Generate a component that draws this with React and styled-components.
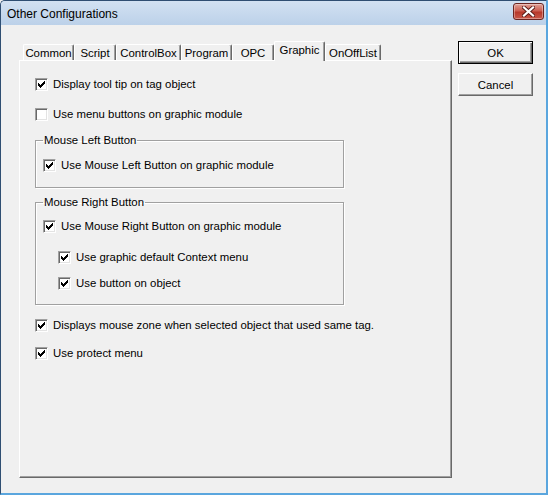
import React from 'react';
import styled, { createGlobalStyle } from 'styled-components';

const GlobalStyle = createGlobalStyle`
  html, body {
    margin: 0;
    padding: 0;
    background: #f0f0f0;
  }
  body {
    font-family: 'Liberation Sans', Arial, sans-serif;
  }
`;

const tabs = [
  { label: 'Common', width: 51 },
  { label: 'Script', width: 42 },
  { label: 'ControlBox', width: 65 },
  { label: 'Program', width: 51 },
  { label: 'OPC', width: 42 },
  { label: 'Graphic', width: 51, active: true },
  { label: 'OnOffList', width: 56 },
];

// classic 7x7 windows check glyph, one 3px column per x
const checkCols = [2, 3, 4, 3, 2, 1, 0];

const CheckBox = ({ checked }) => (
  <Box>
    {checked && (
      <svg width="7" height="7" viewBox="0 0 7 7" shapeRendering="crispEdges">
        {checkCols.map((y, x) => (
          <rect key={x} x={x} y={y} width="1" height="3" fill="#000" />
        ))}
      </svg>
    )}
  </Box>
);

const Option = ({ checked = true, indent, top, children }) => (
  <Row $indent={indent} $top={top}>
    <CheckBox checked={checked} />
    <Label>{children}</Label>
  </Row>
);

const App = () => {
  return (
    <>
      <GlobalStyle />
      <Window>
        <TitleBar>
          <Title>Other Configurations</Title>
          <CloseButton>
            <svg width="13" height="11" viewBox="0 0 13 11">
              <path
                d="M2 1.5 L11 9.5 M11 1.5 L2 9.5"
                stroke="#5a1e1a"
                strokeWidth="4"
                strokeLinecap="square"
              />
              <path
                d="M2 1.5 L11 9.5 M11 1.5 L2 9.5"
                stroke="#ffffff"
                strokeWidth="2.2"
                strokeLinecap="square"
              />
            </svg>
          </CloseButton>
        </TitleBar>

        <Client>
          <TabControl>
            <TabStrip>
              {tabs.map((t) => (
                <Tab key={t.label} $width={t.width} $active={t.active}>
                  {t.label}
                </Tab>
              ))}
            </TabStrip>
            <Panel>
              <Option top={17}>Display tool tip on tag object</Option>
              <Option top={17} checked={false}>
                Use menu buttons on graphic module
              </Option>

              <Group $top={13} $pt={12} $pb={15}>
                <GroupTitle>Mouse Left Button</GroupTitle>
                <Option top={0}>Use Mouse Left Button on graphic module</Option>
              </Group>

              <Group $top={8} $pt={11} $pb={14}>
                <GroupTitle>Mouse Right Button</GroupTitle>
                <Option top={0}>Use Mouse Right Button on graphic module</Option>
                <Option top={18} indent={15}>
                  Use graphic default Context menu
                </Option>
                <Option top={13} indent={15}>
                  Use button on object
                </Option>
              </Group>

              <Option top={14}>
                Displays mouse zone when selected object that used same tag.
              </Option>
              <Option top={15}>Use protect menu</Option>
            </Panel>
          </TabControl>

          <ButtonColumn>
            <DialogButton $default>OK</DialogButton>
            <DialogButton>Cancel</DialogButton>
          </ButtonColumn>
        </Client>
      </Window>
    </>
  );
};
export default App;

const Window = styled.div`
  width: 548px;
  height: 495px;
  box-sizing: border-box;
  display: flex;
  flex-direction: column;
  background: #c3d6ec;
  border-left: 1px solid #2f4e72;
  border-top: 1px solid #2f4e72;
  border-right: 2px solid #5aa6de;
  border-bottom: 2px solid #5aa6de;
  border-top-left-radius: 5px;
  overflow: hidden;
`;

const TitleBar = styled.div`
  height: 24px;
  flex: none;
  display: flex;
  align-items: center;
  justify-content: space-between;
  padding: 0 2px 0 6px;
  background: linear-gradient(#d2e1f2, #bcd1e9);
`;

const Title = styled.span`
  font-family: 'Liberation Sans', Arial, sans-serif;
  font-size: 12px;
  color: #000;
  margin-top: 1px;
`;

const CloseButton = styled.div`
  width: 29px;
  height: 15px;
  margin-top: -3px;
  display: flex;
  align-items: center;
  justify-content: center;
  border: 1px solid #6b2521;
  border-radius: 3px;
  background: linear-gradient(#e0a197, #cc5f52 45%, #b8392b 55%, #c9584a);
  box-shadow: inset 0 0 0 1px rgba(255, 255, 255, 0.35);
`;

const Client = styled.div`
  flex: 1;
  display: flex;
  align-items: flex-start;
  background: #f0f0f0;
  padding: 16px 0 0 18px;
`;

const TabControl = styled.div`
  width: 433px;
  display: flex;
  flex-direction: column;
`;

const TabStrip = styled.div`
  height: 19px;
  display: flex;
  align-items: flex-end;
  padding-left: 4px;
  position: relative;
  z-index: 1;
`;

const Tab = styled.div`
  box-sizing: border-box;
  width: ${(p) => p.$width}px;
  height: ${(p) => (p.$active ? 20 : 16)}px;
  margin-bottom: ${(p) => (p.$active ? -1 : 0)}px;
  padding-top: 2px;
  background: #f0f0f0;
  border-top: 1px solid #ffffff;
  border-left: 1px solid #ffffff;
  border-right: 1px solid #696969;
  box-shadow: inset -1px 0 0 #a0a0a0;
  border-top-left-radius: 2px;
  border-top-right-radius: 2px;
  font-size: 11.4px;
  line-height: 13px;
  color: #000;
  text-align: center;
  white-space: nowrap;
`;

const Panel = styled.div`
  box-sizing: border-box;
  height: 418px;
  display: flex;
  flex-direction: column;
  align-items: flex-start;
  padding: 0 0 0 15px;
  background: #f0f0f0;
  border-top: 1px solid #ffffff;
  border-left: 1px solid #ffffff;
  border-right: 1px solid #696969;
  border-bottom: 1px solid #696969;
  box-shadow: inset -1px -1px 0 #a0a0a0;
`;

const Row = styled.div`
  display: flex;
  align-items: center;
  height: 13px;
  margin-top: ${(p) => p.$top || 0}px;
  margin-left: ${(p) => p.$indent || 0}px;
`;

const Box = styled.div`
  box-sizing: border-box;
  width: 13px;
  height: 13px;
  flex: none;
  display: flex;
  align-items: center;
  justify-content: center;
  background: #ffffff;
  border-top: 1px solid #a0a0a0;
  border-left: 1px solid #a0a0a0;
  border-right: 1px solid #ffffff;
  border-bottom: 1px solid #ffffff;
  box-shadow: inset 1px 1px 0 #696969, inset -1px -1px 0 #e3e3e3;
`;

const Label = styled.span`
  margin-left: 5px;
  font-size: 11.4px;
  line-height: 13px;
  color: #000;
  white-space: nowrap;
`;

const Group = styled.fieldset`
  box-sizing: border-box;
  width: 309px;
  margin: ${(p) => p.$top}px 0 0 0;
  padding: ${(p) => p.$pt}px 0 ${(p) => p.$pb}px 7px;
  border: 1px solid #a0a0a0;
  box-shadow: inset 1px 1px 0 #ffffff, 1px 1px 0 #ffffff;
  display: flex;
  flex-direction: column;
`;

const GroupTitle = styled.legend`
  padding: 0 1px;
  font-size: 11.4px;
  line-height: 13px;
  color: #000;
`;

const ButtonColumn = styled.div`
  display: flex;
  flex-direction: column;
  gap: 9px;
  margin-left: 6px;
`;

const DialogButton = styled.div`
  box-sizing: border-box;
  width: 75px;
  height: 23px;
  display: flex;
  align-items: center;
  justify-content: center;
  font-size: 11.4px;
  color: #000;
  background: #f0f0f0;
  border: 1px solid ${(p) => (p.$default ? '#000000' : '#f0f0f0')};
  box-shadow: inset 1px 1px 0 #ffffff, inset -1px -1px 0 #696969,
    inset -2px -2px 0 #a0a0a0;
  ${(p) =>
    !p.$default &&
    `
    border-top-color: #ffffff;
    border-left-color: #ffffff;
    border-right-color: #696969;
    border-bottom-color: #696969;
    box-shadow: inset -1px -1px 0 #a0a0a0;
  `}
`;
